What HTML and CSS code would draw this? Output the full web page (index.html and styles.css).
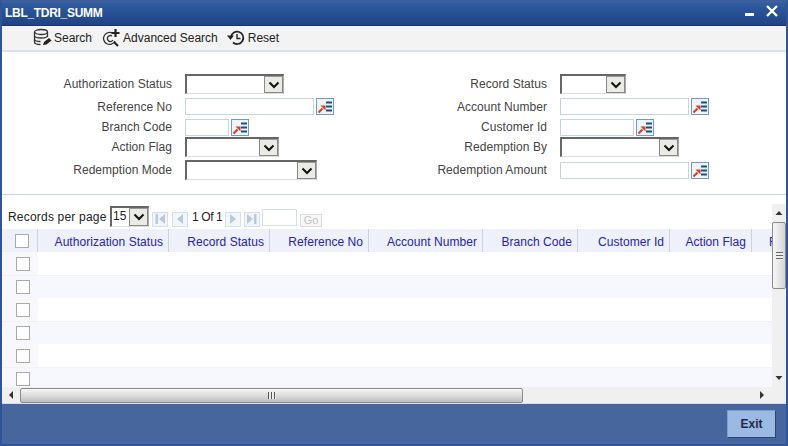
FILE: index.html
```html
<!DOCTYPE html>
<html lang="en">
<head>
<meta charset="utf-8">
<title>LBL_TDRI_SUMM</title>
<link rel="stylesheet" href="styles.css">
</head>
<body>
<svg class="defs" width="0" height="0" aria-hidden="true">
  <defs>
    <symbol id="chev" viewBox="0 0 12 8"><path d="M1.500 1.500 6 6 10.500 1.500" fill="none" stroke="#111" stroke-width="2"/></symbol>
    <symbol id="lookup" viewBox="0 0 18 17">
      <path d="M10 4.500h6M10 8.500h6M10 12.500h6" stroke="#1d4f86" stroke-width="2" fill="none"/>
      <path d="M2.500 14.500 6.500 10.500" stroke="#d8401c" stroke-width="2.200" fill="none"/>
      <path d="M4.500 7.500H9.500V12.500Z" fill="#d8401c"/>
    </symbol>
  </defs>
</svg>
<div class="window">
  <header class="titlebar">
    <span class="title">LBL_TDRI_SUMM</span>
    <span class="win-ctl">
      <svg width="10" height="4" viewBox="0 0 10 4"><rect y="0" width="9" height="3" fill="#fff"/></svg>
      <svg width="12" height="12" viewBox="0 0 12 12"><path d="M1 1 11 11M11 1 1 11" stroke="#fff" stroke-width="2.400"/></svg>
    </span>
  </header>
  <nav class="toolbar">
    <span class="tool tool-search">
      <svg width="19" height="20" viewBox="0 0 19 20"><g fill="none" stroke="#333" stroke-width="1.300"><ellipse cx="8" cy="4" rx="6.500" ry="2.500"/><path d="M1.500 4v10c0 1.500 3 2.500 6 2.500M14.500 4v5M1.500 7.500c0 1.500 3 2.500 6.500 2.500s6.500-1 6.500-2.500M1.500 11c0 1.500 3 2.500 6 2.500"/></g><path d="M10 17l1-3 5-4 2.500 2.500-5 4z" fill="#222"/></svg>
      Search
    </span>
    <span class="tool">
      <svg width="19" height="20" viewBox="0 0 19 20"><g fill="none" stroke="#333" stroke-width="1.300"><path d="M11 5.500A6 6 0 1 0 13 13"/><path d="M10 8a3 3 0 1 0 1 4"/></g><path d="M12 14l4 4" stroke="#222" stroke-width="2.200"/><path d="M13.500 1v8M9.500 5h8" stroke="#222" stroke-width="2.200"/></svg>
      Advanced Search
    </span>
    <span class="tool">
      <svg width="19" height="18" viewBox="0 0 19 18"><path d="M4 8a6.200 6.200 0 1 1 2 5.500" fill="none" stroke="#222" stroke-width="1.700"/><path d="M0 6.500h7L3.500 11z" fill="#222"/><path d="M10 5v4.500h3.500" fill="none" stroke="#222" stroke-width="1.400"/></svg>
      Reset
    </span>
  </nav>
  <section class="form">
    <div class="fields">
      <label class="lbl">Authorization Status</label>
      <div class="ctl"><div class="sel w-99"><span class="sel-btn"><svg width="12" height="8"><use href="#chev"/></svg></span></div></div>
      <label class="lbl">Record Status</label>
      <div class="ctl"><div class="sel w-66"><span class="sel-btn"><svg width="12" height="8"><use href="#chev"/></svg></span></div></div>

      <label class="lbl">Reference No</label>
      <div class="ctl"><input class="inp w-130" type="text"><span class="lk"><svg width="18" height="17"><use href="#lookup"/></svg></span></div>
      <label class="lbl">Account Number</label>
      <div class="ctl"><input class="inp w-130" type="text"><span class="lk"><svg width="18" height="17"><use href="#lookup"/></svg></span></div>

      <label class="lbl">Branch Code</label>
      <div class="ctl"><input class="inp w-44" type="text"><span class="lk"><svg width="18" height="17"><use href="#lookup"/></svg></span></div>
      <label class="lbl">Customer Id</label>
      <div class="ctl"><input class="inp w-74" type="text"><span class="lk"><svg width="18" height="17"><use href="#lookup"/></svg></span></div>

      <label class="lbl">Action Flag</label>
      <div class="ctl"><div class="sel w-94"><span class="sel-btn"><svg width="12" height="8"><use href="#chev"/></svg></span></div></div>
      <label class="lbl">Redemption By</label>
      <div class="ctl"><div class="sel w-119"><span class="sel-btn"><svg width="12" height="8"><use href="#chev"/></svg></span></div></div>

      <label class="lbl">Redemption Mode</label>
      <div class="ctl"><div class="sel w-132"><span class="sel-btn"><svg width="12" height="8"><use href="#chev"/></svg></span></div></div>
      <label class="lbl">Redemption Amount</label>
      <div class="ctl"><input class="inp w-130" type="text"><span class="lk"><svg width="18" height="17"><use href="#lookup"/></svg></span></div>
    </div>
  </section>
  <section class="results">
    <div class="pager">
      <span class="rpp">Records per page</span>
      <div class="sel w-39 sel-pg"><span class="sel-val">15</span><span class="sel-btn"><svg width="12" height="8"><use href="#chev"/></svg></span></div>
      <span class="pg-btn"><svg width="12" height="12" viewBox="0 0 12 12"><path d="M1.500 1h2.500v10H1.500zM11 1v10L5 6z" fill="#b9c9da"/></svg></span>
      <span class="pg-btn gap-4"><svg width="12" height="12" viewBox="0 0 12 12"><path d="M9 1v10L3 6z" fill="#b9c9da"/></svg></span>
      <span class="pg-text">1 Of 1</span>
      <span class="pg-btn"><svg width="12" height="12" viewBox="0 0 12 12"><path d="M3 1v10l6-5z" fill="#b9c9da"/></svg></span>
      <span class="pg-btn gap-3"><svg width="12" height="12" viewBox="0 0 12 12"><path d="M1 1v10l6-5zM8 1h2.500v10H8z" fill="#b9c9da"/></svg></span>
      <input class="pg-input" type="text">
      <span class="pg-go">Go</span>
    </div>
    <div class="vbar">
      <svg class="arrow" width="14" height="18" viewBox="0 0 14 18"><path d="M3.500 11 7 7l3.500 4z" fill="#333"/></svg>
      <div class="vthumb"><span class="grip-h"></span></div>
      <div class="spacer"></div>
      <svg class="arrow" width="14" height="18" viewBox="0 0 14 18"><path d="M3.500 7 7 11l3.500-4z" fill="#333"/></svg>
    </div>
    <div class="viewport">
      <table class="grid">
        <colgroup>
          <col class="c0"><col class="c1"><col class="c2"><col class="c3"><col class="c4"><col class="c5"><col class="c6"><col class="c7"><col class="c8">
        </colgroup>
        <thead>
          <tr>
            <th class="chk"><span class="box"></span></th>
            <th>Authorization Status</th><th>Record Status</th><th>Reference No</th><th>Account Number</th><th>Branch Code</th><th>Customer Id</th><th>Action Flag</th><th class="clip">Redemption By</th>
          </tr>
        </thead>
        <tbody>
          <tr><td class="chk"><span class="box"></span></td><td></td><td></td><td></td><td></td><td></td><td></td><td></td><td></td></tr>
          <tr><td class="chk"><span class="box"></span></td><td></td><td></td><td></td><td></td><td></td><td></td><td></td><td></td></tr>
          <tr><td class="chk"><span class="box"></span></td><td></td><td></td><td></td><td></td><td></td><td></td><td></td><td></td></tr>
          <tr><td class="chk"><span class="box"></span></td><td></td><td></td><td></td><td></td><td></td><td></td><td></td><td></td></tr>
          <tr><td class="chk"><span class="box"></span></td><td></td><td></td><td></td><td></td><td></td><td></td><td></td><td></td></tr>
          <tr><td class="chk"><span class="box"></span></td><td></td><td></td><td></td><td></td><td></td><td></td><td></td><td></td></tr>
        </tbody>
      </table>
    </div>
    <div class="hbar">
      <svg class="arrow" width="18" height="16" viewBox="0 0 18 16"><path d="M11 4v8L7 8z" fill="#333"/></svg>
      <div class="hthumb"><span class="grip-v"></span></div>
      <div class="spacer"></div>
      <svg class="arrow" width="18" height="16" viewBox="0 0 18 16"><path d="M6 4v8l4-4z" fill="#333"/></svg>
    </div>
    <div class="corner"></div>
  </section>
  <footer class="footer">
    <button class="exit" type="button">Exit</button>
  </footer>
</div>
</body>
</html>
```
FILE: styles.css
```css
* { box-sizing: border-box; }
html, body { margin: 0; padding: 0; }
body { font-family: "Liberation Sans", Arial, sans-serif; font-size: 12px; color: #333; background: #47669e; overflow: hidden; }
.defs { position: absolute; }
.window { width: 788px; height: 446px; display: flex; flex-direction: column; background: #47669e; border-left: 2px solid #2f5597; border-right: 2px solid #2f5597; border-bottom: 2px solid #2f5597; border-top: 3px solid #3c5f9c; }

.titlebar { height: 23px; flex: none; display: flex; align-items: center; justify-content: space-between; padding: 0 0 2px 3px; background: linear-gradient(#2f5ca2, #1f4385); border-bottom: 1px solid #1a3467; color: #fff; }
.title { font-weight: bold; font-size: 12px; letter-spacing: -0.3px; }
.win-ctl { display: flex; align-items: flex-start; gap: 11px; padding: 2px 8px 0 0; align-self: flex-start; }
.win-ctl svg:first-child { margin-top: 8px; }

.toolbar { height: 26px; flex: none; display: flex; align-items: center; gap: 9px; padding: 0 0 0 31px; background: #f3f3f3; border-bottom: 2px solid #d8e3ea; font-size: 12px; color: #222; }
.tool { display: inline-flex; align-items: center; gap: 2px; }
.tool-search { margin-right: 1px; }

.form { height: 143px; flex: none; background: #fff; border-bottom: 1px solid #c5d5e2; padding-top: 21px; }
.fields { display: grid; grid-template-columns: 170px 190px 185px 1fr; grid-template-rows: 22px 23px 18px 22px 24px; align-items: center; }
.lbl { text-align: right; color: #444; font-size: 12px; letter-spacing: 0.05px; white-space: nowrap; }
.ctl { display: flex; align-items: center; gap: 2px; padding-left: 13px; }
.inp { height: 17px; border: 1px solid #c5d5e2; background: #fff; padding: 0; margin: 0; }
.w-130 { width: 129px; }
.w-44 { width: 44px; }
.w-74 { width: 74px; }
.lk { width: 18px; height: 17px; display: inline-flex; background: #eef4fa; border: 1px solid #6f9cc4; overflow: hidden; }
.lk svg { margin: -1px; flex: none; }

.sel { height: 20px; display: flex; justify-content: flex-end; background: #fff; border-top: 2px solid #666; border-left: 2px solid #666; border-right: 1px solid #aaa; border-bottom: 1px solid #ddd; }
.w-99 { width: 99px; }
.w-66 { width: 66px; }
.w-94 { width: 94px; }
.w-119 { width: 119px; }
.w-132 { width: 132px; }
.w-39 { width: 39px; }
.sel-btn { width: 19px; display: flex; align-items: center; justify-content: center; background: #ebebe6; border: 1px solid #888; border-top-color: #999; }
.sel-pg { height: 21px; margin: 0 3px 0 0; }
.sel-val { flex: 1; padding-left: 1px; line-height: 17px; font-size: 12px; color: #222; }

.results { flex: 1; min-height: 0; display: grid; grid-template-columns: 1fr 14px; grid-template-rows: 25px 1fr 16px; margin-top: 0; background: #fff; padding-top: 9px; }
.pager { display: flex; align-items: center; padding-left: 6px; color: #222; background: #fff; }
.rpp { font-size: 12px; width: 102px; letter-spacing: 0.2px; white-space: nowrap; }
.pg-btn { width: 16px; height: 15px; display: inline-flex; align-items: center; justify-content: center; background: #f2f6fa; border: 1px solid #d5e0ea; margin-top: 5px; }
.gap-4 { margin-left: 4px; }
.gap-3 { margin-left: 3px; }
.pg-text { font-size: 12px; letter-spacing: -0.4px; margin: 1px 3px 0 4px; width: 30px; white-space: nowrap; }
.pg-input { width: 35px; height: 17px; margin: 1px 3px 0 2px; padding: 0; border: 1px solid #d5e0ea; background: #fff; }
.pg-go { width: 22px; height: 13px; margin-top: 7px; display: inline-flex; align-items: center; justify-content: center; font-size: 11px; color: #c4c4c4; background: #f7f7f7; border: 1px solid #dcdcdc; }

.viewport { overflow: hidden; min-width: 0; min-height: 0; grid-column: 1; grid-row: 2; }
.grid { table-layout: fixed; width: 880px; border-collapse: separate; border-spacing: 0; }
.c0 { width: 36px; }
.c1 { width: 131px; }
.c2 { width: 101px; }
.c3 { width: 99px; }
.c4 { width: 114px; }
.c5 { width: 95px; }
.c6 { width: 92px; }
.c7 { width: 82px; }
.c8 { width: 130px; }
th { height: 23px; padding: 2px 5px 0 0; text-align: right; font-weight: normal; font-size: 12px; letter-spacing: 0.05px; color: #2525ad; background: #eef0fa; border-right: 1px solid #cdd3dc; white-space: nowrap; overflow: hidden; }
th.clip { text-align: left; padding-left: 17px; }
td { height: 23px; padding: 0; background: #fff; }
tbody tr:nth-child(even) td { background: #f7f8fd; border-top: 1px solid #f1f2f8; }
td.chk, th.chk { text-align: center; padding: 0 0 0 5px; background: #f8f8fb; }
th.chk { background: #eef0fa; }
.box { display: inline-block; width: 14px; height: 14px; background: #fff; border: 1px solid #aaa; vertical-align: middle; }

.vbar { grid-column: 2; grid-row: 1 / span 2; display: flex; flex-direction: column; align-items: stretch; background: #f0f0f0; }
.vthumb { height: 67px; flex: none; display: flex; align-items: center; justify-content: center; background: linear-gradient(90deg, #f6f6f6, #d6d6d6); border: 1px solid #8c8c8c; border-radius: 2px; }
.grip-h { width: 7px; height: 8px; background: repeating-linear-gradient(#666 0 1px, #eee 1px 3px); }
.spacer { flex: 1; }
.arrow { flex: none; display: block; }
.hbar { grid-column: 1; grid-row: 3; display: flex; align-items: center; background: #f0f0f0; }
.hthumb { width: 503px; height: 15px; margin-top: 1px; flex: none; display: flex; align-items: center; justify-content: center; background: linear-gradient(#f6f6f6, #d9d9d9 55%, #bdbdc2); border: 1px solid #8c8c8c; border-radius: 2px; }
.grip-v { width: 8px; height: 7px; background: repeating-linear-gradient(90deg, #555 0 1px, #eee 1px 3px); }
.corner { grid-column: 2; grid-row: 3; background: #f0f0f0; }

.footer { height: 41px; flex: none; display: flex; justify-content: flex-end; align-items: flex-start; padding: 6px 10px 0 0; background: #47669e; border-top: 1px solid #d5dde8; }
.exit { width: 49px; height: 28px; padding: 0; font-family: "Liberation Sans", Arial, sans-serif; font-size: 12px; font-weight: bold; color: #1c2b4a; background: #9ab9e3; border: 1px solid #2f4f80; border-color: #7f9ccb #2f4470 #2f4470 #7f9ccb; }
```
